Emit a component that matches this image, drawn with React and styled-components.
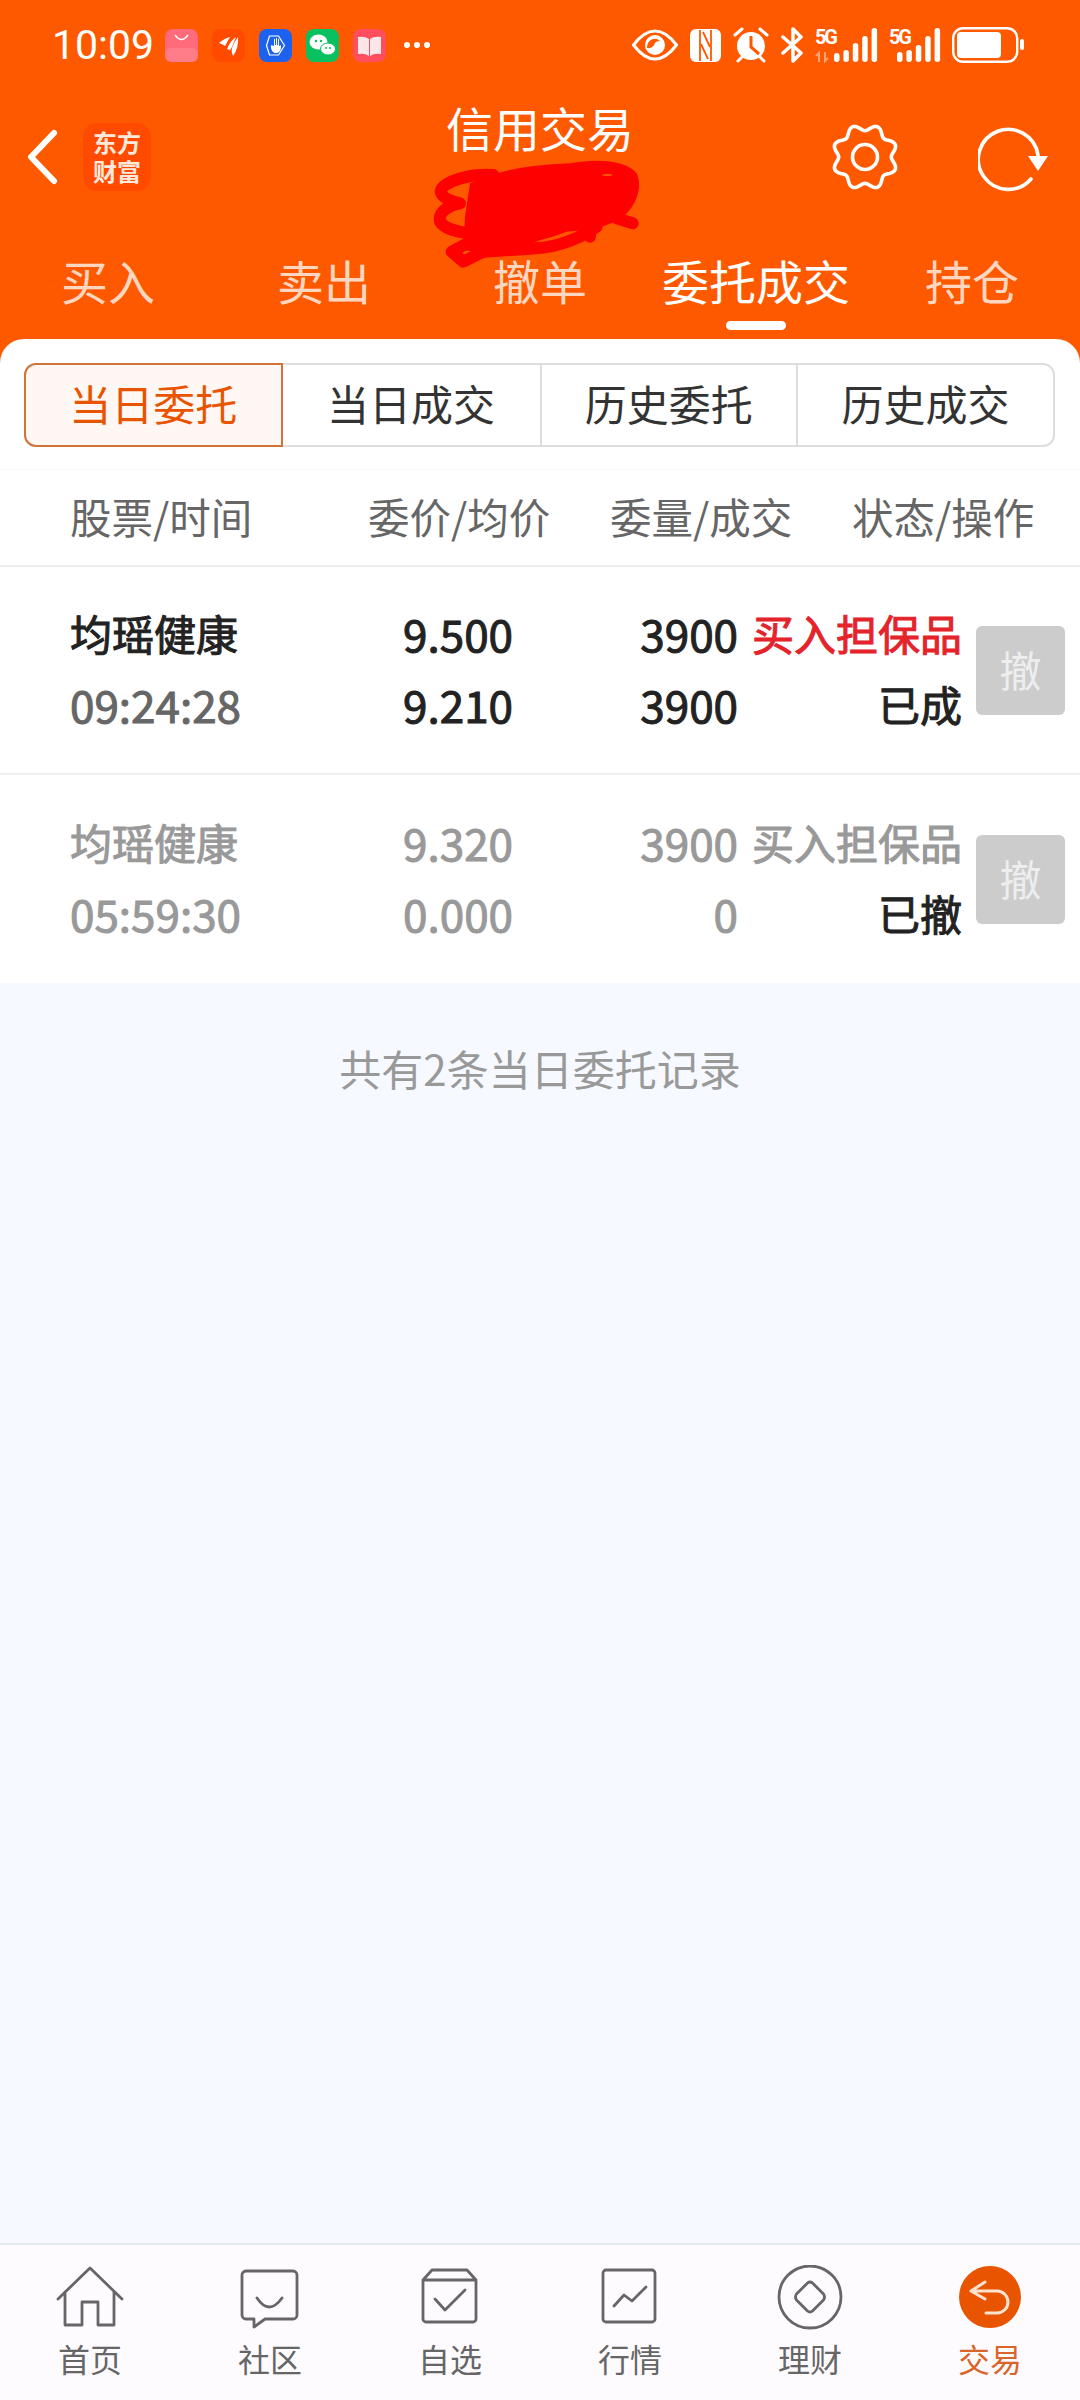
import React from "react";
import styled, { createGlobalStyle } from "styled-components";

const Global = createGlobalStyle`
  html, body { margin: 0; padding: 0; background: #ff5900; }
  body { font-family: "Noto Sans CJK SC", "Noto Sans", sans-serif; }
  * { box-sizing: border-box; }
`;

const Page = styled.div`
  width: 1080px; height: 2400px; display: flex; flex-direction: column;
  background: #ff5900; overflow: hidden;
`;
const StatusBar = styled.div`
  height: 90px; padding: 0 56px 0 52px; display: flex; align-items: center; justify-content: space-between; color: #fff;
`;
const StatusGroup = styled.div`display: flex; align-items: center;`;
const Time = styled.span`
  font: 400 41px/1 Roboto, sans-serif; width: 113px; color: #fff;
`;
const Tile = styled.svg`width: 33px; height: 33px; margin-right: 14px; display: block;`;
const Dots = styled.svg`width: 28px; height: 8px; margin-left: 3px; display: block;`;
const StatusIcon = styled.svg`display: block; margin-left: ${p => p.$gap || 0}px;`;

const NavBar = styled.div`
  height: 134px; padding: 0 30px 0 27px; display: flex; align-items: center; position: relative;
`;
const Back = styled.svg`width: 32px; height: 56px; display: block;`;
const Logo = styled.div`
  width: 68px; height: 68px; margin-left: 24px; border-radius: 14px; background: #ff4a00; color: #ffe9dc;
  font-weight: 700; font-size: 24px; line-height: 29px; text-align: center; padding-top: 4px;
`;
const TitleBlock = styled.div`
  flex: 1; align-self: flex-start; text-align: center; color: #fff; font-size: 47px; line-height: 60px;
  padding-top: 7px; padding-left: 100px; position: relative;
`;
const Scribble = styled.svg`
  position: absolute; left: 259px; top: 50px; width: 240px; height: 140px; overflow: visible;
`;
const NavIcon = styled.svg`width: 72px; height: 72px; display: block; margin-left: ${p => p.$gap}px;`;

const Tabs = styled.div`
  height: 115px; display: grid; grid-template-columns: repeat(5, 216px);
`;
const Tab = styled.div`
  position: relative; display: flex; align-items: center; justify-content: center; font-size: 47px; padding-bottom: 5px;
  color: ${p => (p.$active ? "#fff" : "#ffd6c0")};
  ${p => p.$active && `&::after {
    content: ""; position: absolute; left: 78px; bottom: 9px; width: 60px; height: 9px; border-radius: 5px; background: #fff;
  }`}
`;

const Sheet = styled.div`
  flex: 1; min-height: 0; display: flex; flex-direction: column; background: #fff; border-radius: 24px 24px 0 0; overflow: hidden;
`;
const SegmentWrap = styled.div`
  height: 131px; padding: 24px 25px 0 24px; border-bottom: 1px solid #f8f8f8;
`;
const Segments = styled.div`
  height: 84px; display: grid; grid-template-columns: repeat(4, 1fr); border: 2px solid #ddd; border-radius: 12px;
`;
const Segment = styled.div`
  display: flex; align-items: center; justify-content: center; font-size: 42px; padding-bottom: 5px; margin: ${p => (p.$active ? "-2px 0 -2px -2px" : "0")};
  color: ${p => (p.$active ? "#e85400" : "#333")};
  background: ${p => (p.$active ? "#fff7f3" : "transparent")};
  border: ${p => (p.$active ? "2px solid #d0743a" : "none")};
  border-left: ${p => (p.$first || p.$active ? "" : "2px solid #ddd")};
  border-radius: ${p => (p.$active ? "12px 0 0 12px" : "0")};
`;
const HeadRow = styled.div`
  height: 97px; padding: 0 0 3px 70px; display: grid; grid-template-columns: 298px 242px 242px auto; align-items: center;
  border-bottom: 2px solid #eee; color: #666; font-size: 41.5px;
`;
const OrderRow = styled.div`
  height: 208px; padding-left: 70px; display: grid;
  grid-template-columns: 300px 143px 225px 224px 89px; grid-template-rows: 71px 71px; align-content: center; align-items: center;
  border-bottom: ${p => (p.$last ? "none" : "2px solid #f0f0f0")};
`;
const Cell = styled.div`
  font-size: 42px; white-space: nowrap; text-align: ${p => (p.$left ? "left" : "right")}; -webkit-text-stroke: 1px currentColor; padding-bottom: 4px;
  color: ${p => p.$color || "#222"};
`;
const Num = styled(Cell)`font-size: 44px;`;
const Cancel = styled.div`
  grid-column: 5; grid-row: 1 / 3; margin-left: 14px; width: 89px; height: 89px; border-radius: 6px; background: #ccc; color: #eee;
  display: flex; align-items: center; justify-content: center; font-size: 42px; align-self: center; padding-bottom: 4px;
`;
const Rest = styled.div`
  flex: 1; background: #f6f9ff; text-align: center; color: #999; font-size: 42px; line-height: 60px; padding-top: 55px;
`;
const BottomNav = styled.div`
  height: 157px; padding-top: 20px; background: #fefbff; border-top: 2px solid #e3e8ec;
  display: grid; grid-template-columns: repeat(6, 180px);
`;
const NavItem = styled.div`
  display: flex; flex-direction: column; align-items: center; font-size: 32px; line-height: 40px;
  color: ${p => (p.$active ? "#d9652a" : "#666")};
`;
const NavGlyph = styled.svg`
  width: 72px; height: 66px; display: block; margin-bottom: 7px; fill: none; stroke: #666; stroke-width: 2.8; stroke-linejoin: round; stroke-linecap: round;
`;

const gearPath = (() => {
  const pts = [];
  for (let i = 0; i < 160; i++) {
    const t = (i / 160) * Math.PI * 2;
    const r = 29.5 - 3.2 * Math.cos(8 * t);
    pts.push(`${(36 + r * Math.sin(t)).toFixed(2)} ${(36 - r * Math.cos(t)).toFixed(2)}`);
  }
  return `M${pts.join("L")}Z`;
})();

const tabs = ["买入", "卖出", "撤单", "委托成交", "持仓"];
const segs = ["当日委托", "当日成交", "历史委托", "历史成交"];
const heads = ["股票/时间", "委价/均价", "委量/成交", "状态/操作"];

function Bars({ tops, x0, step }) {
  return tops.map((t, i) => (
    <rect key={i} x={x0 + i * step} y={t} width="5.5" height={34 - t} rx="2.7" fill="#fff" />
  ));
}

export default function App() {
  return (
    <Page>
      <Global />
      <StatusBar>
        <StatusGroup>
          <Time>10:09</Time>
          <Tile viewBox="0 0 33 33"><rect width="33" height="33" rx="8" fill="#ff6b7a" /><rect y="19" width="33" height="14" rx="6" fill="#ff7c88" /><path d="M10 6q6.500 9 13 0" fill="none" stroke="#fff" strokeWidth="1.3" /></Tile>
          <Tile viewBox="0 0 33 33"><rect width="33" height="33" rx="8" fill="#ff4a00" /><path d="M7 14q6-5 11-6l-5 9q-3-2-6-3ZM15 20q3-8 9-12l-4 10-2 3ZM21 27q-2-5-1-8 2-6 6-11 1 11-5 19Z" fill="#fff" /></Tile>
          <Tile viewBox="0 0 33 33"><rect width="33" height="33" rx="8" fill="#1c62ee" /><path d="M9 16.500L12 7h9l6 9.500-6 9.500h-9Z" fill="none" stroke="#fff" strokeWidth="1.200" transform="translate(-1.500 0)" /><path d="M12 16v3q1 5 5 5t5-5v-3l-2 1v-7h-1v6h-1V9h-1v7h-1v-6h-1v7Z" fill="#fff" /></Tile>
          <Tile viewBox="0 0 33 33"><rect width="33" height="33" rx="8" fill="#07c160" /><ellipse cx="12.500" cy="13" rx="9" ry="7.500" fill="#fff" /><ellipse cx="22" cy="20" rx="7.500" ry="6" fill="#fff" stroke="#07c160" /><circle cx="10" cy="12" r="1.200" fill="#07c160" /><circle cx="15" cy="12" r="1.200" fill="#07c160" /><circle cx="20" cy="19" r="1" fill="#07c160" /><circle cx="24" cy="19" r="1" fill="#07c160" /></Tile>
          <Tile viewBox="0 0 33 33"><rect width="33" height="33" rx="8" fill="#ff4f5e" /><path d="M5 8q7-1 11 2v17q-4-3-11-2ZM28 8q-7-1-11 2v17q4-3 11-2Z" fill="#fde6e8" /></Tile>
          <Dots viewBox="0 0 28 8"><circle cx="4" cy="4" r="3" fill="#fff" /><circle cx="14" cy="4" r="3" fill="#fff" /><circle cx="24" cy="4" r="3" fill="#fff" /></Dots>
        </StatusGroup>
        <StatusGroup>
          <StatusIcon width="46" height="32" viewBox="0 0 46 32"><path d="M1.500 16Q12 2 23 2t21.500 14Q34 30 23 30T1.500 16Z" fill="none" stroke="#fff" strokeWidth="3" /><circle cx="23" cy="16" r="10" fill="#fff" /><path d="M15 19q6 1 8-5 1-2 5-2-3-3-7-2-6 2-6 9Z" fill="#ff5900" /></StatusIcon>
          <StatusIcon $gap={12} width="31" height="33" viewBox="0 0 31 33"><rect width="31" height="33" rx="6" fill="#fff" /><path d="M10 1v31M21 1v31" stroke="#ff5900" strokeWidth="1.800" /><path d="M13 3l7 15M11 15l7 15" stroke="#ff5900" strokeWidth="1.800" /></StatusIcon>
          <StatusIcon $gap={12} width="36" height="36" viewBox="0 0 36 36"><circle cx="18" cy="19" r="14" fill="#fff" /><path d="M18 9v11l8 7" fill="none" stroke="#ff5900" strokeWidth="3" /><path d="M2 8l7-6M34 8l-7-6M5 34l4-4M31 34l-4-4" stroke="#fff" strokeWidth="3" strokeLinecap="round" /></StatusIcon>
          <StatusIcon $gap={12} width="22" height="36" viewBox="0 0 22 36"><path d="M2 10l18 16-8 8V2l8 8L2 26" fill="none" stroke="#fff" strokeWidth="3.500" strokeLinejoin="round" strokeLinecap="round" /></StatusIcon>
          <StatusIcon $gap={12} width="63" height="46" viewBox="0 -6 63 46"><text x="0" y="16" fontFamily="Roboto, sans-serif" fontWeight="700" fontSize="20" fill="#fff" textLength="23">5G</text><path d="M4 34v-9l-3 3M10 24v9l3-3" stroke="#ffa27a" strokeWidth="2" fill="none" /><Bars tops={[25, 22, 15, 8, 0]} x0={19} step={9.4} /></StatusIcon>
          <StatusIcon $gap={11} width="54" height="46" viewBox="0 -6 54 46"><text x="0" y="16" fontFamily="Roboto, sans-serif" fontWeight="700" fontSize="20" fill="#fff" textLength="23">5G</text><Bars tops={[24, 22, 17, 8, 0]} x0={8} step={9.4} /></StatusIcon>
          <StatusIcon $gap={9} width="72" height="36" viewBox="0 0 72 36"><rect x="1.200" y="1.200" width="64" height="33.600" rx="10" fill="none" stroke="#fff" strokeWidth="2.400" /><rect x="5" y="5" width="44" height="26" rx="4" fill="#fff" /><rect x="68" y="12" width="4" height="11" rx="2" fill="#fff" /></StatusIcon>
        </StatusGroup>
      </StatusBar>

      <NavBar>
        <Back viewBox="0 0 32 56"><path d="M27 4L4 28l23 24" fill="none" stroke="#fff" strokeWidth="6" strokeLinecap="round" strokeLinejoin="round" /></Back>
        <Logo>东方<br />财富</Logo>
        <TitleBlock>
          信用交易
          <Scribble viewBox="0 0 720 420">
            <g fill="none" stroke="#f00" strokeWidth="36" strokeLinecap="round" strokeLinejoin="round">
              <path d="M250 105C180 100 95 125 92 155C95 175 130 185 150 190C100 200 85 225 90 245C105 270 150 275 170 280" />
              <path d="M190 300L125 335L160 365L220 335" />
              <path d="M220 335L380 325C450 320 520 290 560 260" />
              <path d="M620 235L668 250" />
              <path d="M540 270V290" />
            </g>
            <path d="M180 130C260 95 340 75 480 70C560 55 650 60 680 100C695 130 688 185 645 225C600 262 540 270 470 275C420 295 380 300 370 310C300 335 220 340 160 330L165 230Z" fill="#f00" />
            <ellipse cx="592" cy="105" rx="15" ry="3" fill="#ff5900" />
          </Scribble>
        </TitleBlock>
        <NavIcon $gap={0} viewBox="0 0 72 72"><path d={gearPath} fill="none" stroke="#fff" strokeWidth="3.600" strokeLinejoin="round" /><circle cx="36" cy="36" r="12.500" fill="none" stroke="#fff" strokeWidth="3.600" /></NavIcon>
        <NavIcon $gap={77} viewBox="0 0 72 72"><path d="M60 34A30 30 0 1 0 53 58" fill="none" stroke="#fff" strokeWidth="3.600" strokeLinecap="round" /><path d="M50 35H70L60 50Z" fill="#fff" /></NavIcon>
      </NavBar>

      <Tabs>
        {tabs.map((t, i) => <Tab key={t} $active={i === 3}>{t}</Tab>)}
      </Tabs>

      <Sheet>
        <SegmentWrap>
          <Segments>
            {segs.map((s, i) => <Segment key={s} $active={i === 0} $first={i === 1}>{s}</Segment>)}
          </Segments>
        </SegmentWrap>
        <HeadRow>{heads.map(h => <div key={h}>{h}</div>)}</HeadRow>

        <OrderRow>
          <Cell $left>均瑶健康</Cell><Num>9.500</Num><Num>3900</Num><Cell $color="#e4232b">买入担保品</Cell>
          <Cancel>撤</Cancel>
          <Num $left $color="#666">09:24:28</Num><Num>9.210</Num><Num>3900</Num><Cell>已成</Cell>
        </OrderRow>
        <OrderRow $last>
          <Cell $left $color="#999">均瑶健康</Cell><Num $color="#999">9.320</Num><Num $color="#999">3900</Num><Cell $color="#999">买入担保品</Cell>
          <Cancel>撤</Cancel>
          <Num $left $color="#999">05:59:30</Num><Num $color="#999">0.000</Num><Num $color="#999">0</Num><Cell>已撤</Cell>
        </OrderRow>

        <Rest>共有2条当日委托记录</Rest>

        <BottomNav>
          <NavItem>
            <NavGlyph viewBox="0 0 72 66"><path d="M4 34L36 3l32 31M11 27v33h17V37h16v23h16V27" /></NavGlyph>首页
          </NavItem>
          <NavItem>
            <NavGlyph viewBox="0 0 72 66"><path d="M12 6h47a4 4 0 0 1 4 4v40a4 4 0 0 1-4 4H31L20 62v-8h-8a4 4 0 0 1-4-4V10a4 4 0 0 1 4-4ZM23 33q12 18 25 0" /></NavGlyph>社区
          </NavItem>
          <NavItem>
            <NavGlyph viewBox="0 0 72 66"><path d="M9 15l9-10h35l9 10v39a3 3 0 0 1-3 3H12a3 3 0 0 1-3-3ZM9 15h53M21 34l10 11 20-20" /></NavGlyph>自选
          </NavItem>
          <NavItem>
            <NavGlyph viewBox="0 0 72 66"><rect x="9" y="5" width="52" height="52" rx="3" /><path d="M20 41l10-11 8 6 14-14" /></NavGlyph>行情
          </NavItem>
          <NavItem>
            <NavGlyph viewBox="0 0 72 66"><circle cx="36" cy="32" r="31" /><path d="M33.500 18q2.500-2 5 0l11 11q2 3 0 6l-11 11q-2.500 2-5 0l-11-11q-2-3 0-6Z" /></NavGlyph>理财
          </NavItem>
          <NavItem $active>
            <NavGlyph viewBox="0 0 72 66"><circle cx="36" cy="32" r="31" fill="#e85400" stroke="none" /><path d="M31 17L17 26l14 8M17 26h26a11 11 0 0 1 0 22H32" stroke="#ffe3cf" strokeWidth="3" /></NavGlyph>交易
          </NavItem>
        </BottomNav>
      </Sheet>
    </Page>
  );
}
